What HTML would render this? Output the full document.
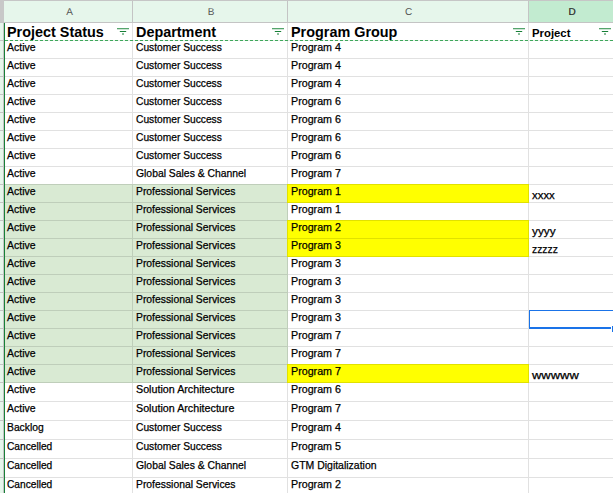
<!DOCTYPE html>
<html><head><meta charset="utf-8"><title>Sheet</title>
<style>
html,body{margin:0;padding:0;}
body{width:613px;height:493px;overflow:hidden;background:#fff;position:relative;font-family:"Liberation Sans",sans-serif;color:#000;}
.a{position:absolute;}
.t{position:absolute;white-space:nowrap;font-size:11px;line-height:14px;transform:scaleX(0.925);transform-origin:0 0;-webkit-text-stroke:0.25px #000;}
.h{position:absolute;white-space:nowrap;font-weight:bold;font-size:14.2px;line-height:16px;transform:scaleX(1.015);transform-origin:0 0;}
.ch{position:absolute;top:2px;height:21px;line-height:22px;text-align:center;font-size:10px;color:#555;text-rendering:geometricPrecision;}
</style></head><body>

<div class="a" style="left:0px;top:0px;width:613px;height:22px;background:#e6f6eb;"></div>
<div class="a" style="left:528px;top:0px;width:85px;height:22px;background:#c2ebd0;"></div>
<div class="a" style="left:0px;top:0px;width:613px;height:1px;background:#c6c6c6;"></div>
<div class="a" style="left:0px;top:22px;width:613px;height:1px;background:#c4c4c4;"></div>
<div class="a" style="left:0px;top:0px;width:4px;height:22px;background:#c8c8c8;"></div>
<div class="a" style="left:0px;top:23px;width:3px;height:470px;background:#e6f6eb;"></div>
<div class="a" style="left:3px;top:23px;width:1px;height:470px;background:#c4c4c4;"></div>
<div class="a" style="left:132px;top:1px;width:1px;height:21px;background:#c4c4c4;"></div>
<div class="a" style="left:287px;top:1px;width:1px;height:21px;background:#c4c4c4;"></div>
<div class="a" style="left:528px;top:1px;width:1px;height:21px;background:#c4c4c4;"></div>
<div class="ch" style="left:6px;width:127px;color:#555;">A</div>
<div class="ch" style="left:134px;width:154px;color:#555;">B</div>
<div class="ch" style="left:288px;width:241px;color:#555;">C</div>
<div class="ch" style="left:529px;width:86px;color:#222;-webkit-text-stroke:0.2px #222;">D</div>
<div class="a" style="left:5px;top:184px;width:283px;height:19px;background:#d9ead3;"></div>
<div class="a" style="left:5px;top:202px;width:283px;height:19px;background:#d9ead3;"></div>
<div class="a" style="left:5px;top:220px;width:283px;height:19px;background:#d9ead3;"></div>
<div class="a" style="left:5px;top:238px;width:283px;height:19px;background:#d9ead3;"></div>
<div class="a" style="left:5px;top:256px;width:283px;height:19px;background:#d9ead3;"></div>
<div class="a" style="left:5px;top:274px;width:283px;height:19px;background:#d9ead3;"></div>
<div class="a" style="left:5px;top:292px;width:283px;height:19px;background:#d9ead3;"></div>
<div class="a" style="left:5px;top:310px;width:283px;height:19px;background:#d9ead3;"></div>
<div class="a" style="left:5px;top:328px;width:283px;height:19px;background:#d9ead3;"></div>
<div class="a" style="left:5px;top:346px;width:283px;height:19px;background:#d9ead3;"></div>
<div class="a" style="left:5px;top:364px;width:283px;height:19px;background:#d9ead3;"></div>
<div class="a" style="left:287px;top:184px;width:242px;height:19px;background:#ffff00;"></div>
<div class="a" style="left:287px;top:220px;width:242px;height:19px;background:#ffff00;"></div>
<div class="a" style="left:287px;top:238px;width:242px;height:19px;background:#ffff00;"></div>
<div class="a" style="left:287px;top:364px;width:242px;height:19px;background:#ffff00;"></div>
<div class="a" style="left:0px;top:58px;width:3px;height:1px;background:#c4c4c4;"></div>
<div class="a" style="left:5px;top:58px;width:608px;height:1px;background:rgba(0,0,0,0.118);"></div>
<div class="a" style="left:0px;top:76px;width:3px;height:1px;background:#c4c4c4;"></div>
<div class="a" style="left:5px;top:76px;width:608px;height:1px;background:rgba(0,0,0,0.118);"></div>
<div class="a" style="left:0px;top:94px;width:3px;height:1px;background:#c4c4c4;"></div>
<div class="a" style="left:5px;top:94px;width:608px;height:1px;background:rgba(0,0,0,0.118);"></div>
<div class="a" style="left:0px;top:112px;width:3px;height:1px;background:#c4c4c4;"></div>
<div class="a" style="left:5px;top:112px;width:608px;height:1px;background:rgba(0,0,0,0.118);"></div>
<div class="a" style="left:0px;top:130px;width:3px;height:1px;background:#c4c4c4;"></div>
<div class="a" style="left:5px;top:130px;width:608px;height:1px;background:rgba(0,0,0,0.118);"></div>
<div class="a" style="left:0px;top:148px;width:3px;height:1px;background:#c4c4c4;"></div>
<div class="a" style="left:5px;top:148px;width:608px;height:1px;background:rgba(0,0,0,0.118);"></div>
<div class="a" style="left:0px;top:166px;width:3px;height:1px;background:#c4c4c4;"></div>
<div class="a" style="left:5px;top:166px;width:608px;height:1px;background:rgba(0,0,0,0.118);"></div>
<div class="a" style="left:0px;top:184px;width:3px;height:1px;background:#c4c4c4;"></div>
<div class="a" style="left:5px;top:184px;width:608px;height:1px;background:rgba(0,0,0,0.118);"></div>
<div class="a" style="left:0px;top:202px;width:3px;height:1px;background:#c4c4c4;"></div>
<div class="a" style="left:5px;top:202px;width:608px;height:1px;background:rgba(0,0,0,0.118);"></div>
<div class="a" style="left:0px;top:220px;width:3px;height:1px;background:#c4c4c4;"></div>
<div class="a" style="left:5px;top:220px;width:608px;height:1px;background:rgba(0,0,0,0.118);"></div>
<div class="a" style="left:0px;top:238px;width:3px;height:1px;background:#c4c4c4;"></div>
<div class="a" style="left:5px;top:238px;width:608px;height:1px;background:rgba(0,0,0,0.118);"></div>
<div class="a" style="left:0px;top:256px;width:3px;height:1px;background:#c4c4c4;"></div>
<div class="a" style="left:5px;top:256px;width:608px;height:1px;background:rgba(0,0,0,0.118);"></div>
<div class="a" style="left:0px;top:274px;width:3px;height:1px;background:#c4c4c4;"></div>
<div class="a" style="left:5px;top:274px;width:608px;height:1px;background:rgba(0,0,0,0.118);"></div>
<div class="a" style="left:0px;top:292px;width:3px;height:1px;background:#c4c4c4;"></div>
<div class="a" style="left:5px;top:292px;width:608px;height:1px;background:rgba(0,0,0,0.118);"></div>
<div class="a" style="left:0px;top:310px;width:3px;height:1px;background:#c4c4c4;"></div>
<div class="a" style="left:5px;top:310px;width:608px;height:1px;background:rgba(0,0,0,0.118);"></div>
<div class="a" style="left:0px;top:328px;width:3px;height:1px;background:#c4c4c4;"></div>
<div class="a" style="left:5px;top:328px;width:608px;height:1px;background:rgba(0,0,0,0.118);"></div>
<div class="a" style="left:0px;top:346px;width:3px;height:1px;background:#c4c4c4;"></div>
<div class="a" style="left:5px;top:346px;width:608px;height:1px;background:rgba(0,0,0,0.118);"></div>
<div class="a" style="left:0px;top:364px;width:3px;height:1px;background:#c4c4c4;"></div>
<div class="a" style="left:5px;top:364px;width:608px;height:1px;background:rgba(0,0,0,0.118);"></div>
<div class="a" style="left:0px;top:382px;width:3px;height:1px;background:#c4c4c4;"></div>
<div class="a" style="left:5px;top:382px;width:608px;height:1px;background:rgba(0,0,0,0.118);"></div>
<div class="a" style="left:0px;top:401px;width:3px;height:1px;background:#c4c4c4;"></div>
<div class="a" style="left:5px;top:401px;width:608px;height:1px;background:rgba(0,0,0,0.118);"></div>
<div class="a" style="left:0px;top:420px;width:3px;height:1px;background:#c4c4c4;"></div>
<div class="a" style="left:5px;top:420px;width:608px;height:1px;background:rgba(0,0,0,0.118);"></div>
<div class="a" style="left:0px;top:439px;width:3px;height:1px;background:#c4c4c4;"></div>
<div class="a" style="left:5px;top:439px;width:608px;height:1px;background:rgba(0,0,0,0.118);"></div>
<div class="a" style="left:0px;top:458px;width:3px;height:1px;background:#c4c4c4;"></div>
<div class="a" style="left:5px;top:458px;width:608px;height:1px;background:rgba(0,0,0,0.118);"></div>
<div class="a" style="left:0px;top:477px;width:3px;height:1px;background:#c4c4c4;"></div>
<div class="a" style="left:5px;top:477px;width:608px;height:1px;background:rgba(0,0,0,0.118);"></div>
<div class="a" style="left:0px;top:496px;width:3px;height:1px;background:#c4c4c4;"></div>
<div class="a" style="left:5px;top:496px;width:608px;height:1px;background:rgba(0,0,0,0.118);"></div>
<div class="a" style="left:132px;top:41px;width:1px;height:17px;background:rgba(0,0,0,0.118);"></div>
<div class="a" style="left:132px;top:59px;width:1px;height:17px;background:rgba(0,0,0,0.118);"></div>
<div class="a" style="left:132px;top:77px;width:1px;height:17px;background:rgba(0,0,0,0.118);"></div>
<div class="a" style="left:132px;top:95px;width:1px;height:17px;background:rgba(0,0,0,0.118);"></div>
<div class="a" style="left:132px;top:113px;width:1px;height:17px;background:rgba(0,0,0,0.118);"></div>
<div class="a" style="left:132px;top:131px;width:1px;height:17px;background:rgba(0,0,0,0.118);"></div>
<div class="a" style="left:132px;top:149px;width:1px;height:17px;background:rgba(0,0,0,0.118);"></div>
<div class="a" style="left:132px;top:167px;width:1px;height:17px;background:rgba(0,0,0,0.118);"></div>
<div class="a" style="left:132px;top:185px;width:1px;height:17px;background:rgba(0,0,0,0.118);"></div>
<div class="a" style="left:132px;top:203px;width:1px;height:17px;background:rgba(0,0,0,0.118);"></div>
<div class="a" style="left:132px;top:221px;width:1px;height:17px;background:rgba(0,0,0,0.118);"></div>
<div class="a" style="left:132px;top:239px;width:1px;height:17px;background:rgba(0,0,0,0.118);"></div>
<div class="a" style="left:132px;top:257px;width:1px;height:17px;background:rgba(0,0,0,0.118);"></div>
<div class="a" style="left:132px;top:275px;width:1px;height:17px;background:rgba(0,0,0,0.118);"></div>
<div class="a" style="left:132px;top:293px;width:1px;height:17px;background:rgba(0,0,0,0.118);"></div>
<div class="a" style="left:132px;top:311px;width:1px;height:17px;background:rgba(0,0,0,0.118);"></div>
<div class="a" style="left:132px;top:329px;width:1px;height:17px;background:rgba(0,0,0,0.118);"></div>
<div class="a" style="left:132px;top:347px;width:1px;height:17px;background:rgba(0,0,0,0.118);"></div>
<div class="a" style="left:132px;top:365px;width:1px;height:17px;background:rgba(0,0,0,0.118);"></div>
<div class="a" style="left:132px;top:383px;width:1px;height:18px;background:rgba(0,0,0,0.118);"></div>
<div class="a" style="left:132px;top:402px;width:1px;height:18px;background:rgba(0,0,0,0.118);"></div>
<div class="a" style="left:132px;top:421px;width:1px;height:18px;background:rgba(0,0,0,0.118);"></div>
<div class="a" style="left:132px;top:440px;width:1px;height:18px;background:rgba(0,0,0,0.118);"></div>
<div class="a" style="left:132px;top:459px;width:1px;height:18px;background:rgba(0,0,0,0.118);"></div>
<div class="a" style="left:132px;top:478px;width:1px;height:15px;background:rgba(0,0,0,0.118);"></div>
<div class="a" style="left:132px;top:23px;width:1px;height:17px;background:rgba(0,0,0,0.118);"></div>
<div class="a" style="left:287px;top:41px;width:1px;height:17px;background:rgba(0,0,0,0.118);"></div>
<div class="a" style="left:287px;top:59px;width:1px;height:17px;background:rgba(0,0,0,0.118);"></div>
<div class="a" style="left:287px;top:77px;width:1px;height:17px;background:rgba(0,0,0,0.118);"></div>
<div class="a" style="left:287px;top:95px;width:1px;height:17px;background:rgba(0,0,0,0.118);"></div>
<div class="a" style="left:287px;top:113px;width:1px;height:17px;background:rgba(0,0,0,0.118);"></div>
<div class="a" style="left:287px;top:131px;width:1px;height:17px;background:rgba(0,0,0,0.118);"></div>
<div class="a" style="left:287px;top:149px;width:1px;height:17px;background:rgba(0,0,0,0.118);"></div>
<div class="a" style="left:287px;top:167px;width:1px;height:17px;background:rgba(0,0,0,0.118);"></div>
<div class="a" style="left:287px;top:185px;width:1px;height:17px;background:rgba(0,0,0,0.118);"></div>
<div class="a" style="left:287px;top:203px;width:1px;height:17px;background:rgba(0,0,0,0.118);"></div>
<div class="a" style="left:287px;top:221px;width:1px;height:17px;background:rgba(0,0,0,0.118);"></div>
<div class="a" style="left:287px;top:239px;width:1px;height:17px;background:rgba(0,0,0,0.118);"></div>
<div class="a" style="left:287px;top:257px;width:1px;height:17px;background:rgba(0,0,0,0.118);"></div>
<div class="a" style="left:287px;top:275px;width:1px;height:17px;background:rgba(0,0,0,0.118);"></div>
<div class="a" style="left:287px;top:293px;width:1px;height:17px;background:rgba(0,0,0,0.118);"></div>
<div class="a" style="left:287px;top:311px;width:1px;height:17px;background:rgba(0,0,0,0.118);"></div>
<div class="a" style="left:287px;top:329px;width:1px;height:17px;background:rgba(0,0,0,0.118);"></div>
<div class="a" style="left:287px;top:347px;width:1px;height:17px;background:rgba(0,0,0,0.118);"></div>
<div class="a" style="left:287px;top:365px;width:1px;height:17px;background:rgba(0,0,0,0.118);"></div>
<div class="a" style="left:287px;top:383px;width:1px;height:18px;background:rgba(0,0,0,0.118);"></div>
<div class="a" style="left:287px;top:402px;width:1px;height:18px;background:rgba(0,0,0,0.118);"></div>
<div class="a" style="left:287px;top:421px;width:1px;height:18px;background:rgba(0,0,0,0.118);"></div>
<div class="a" style="left:287px;top:440px;width:1px;height:18px;background:rgba(0,0,0,0.118);"></div>
<div class="a" style="left:287px;top:459px;width:1px;height:18px;background:rgba(0,0,0,0.118);"></div>
<div class="a" style="left:287px;top:478px;width:1px;height:15px;background:rgba(0,0,0,0.118);"></div>
<div class="a" style="left:287px;top:23px;width:1px;height:17px;background:rgba(0,0,0,0.118);"></div>
<div class="a" style="left:528px;top:41px;width:1px;height:17px;background:rgba(0,0,0,0.118);"></div>
<div class="a" style="left:528px;top:59px;width:1px;height:17px;background:rgba(0,0,0,0.118);"></div>
<div class="a" style="left:528px;top:77px;width:1px;height:17px;background:rgba(0,0,0,0.118);"></div>
<div class="a" style="left:528px;top:95px;width:1px;height:17px;background:rgba(0,0,0,0.118);"></div>
<div class="a" style="left:528px;top:113px;width:1px;height:17px;background:rgba(0,0,0,0.118);"></div>
<div class="a" style="left:528px;top:131px;width:1px;height:17px;background:rgba(0,0,0,0.118);"></div>
<div class="a" style="left:528px;top:149px;width:1px;height:17px;background:rgba(0,0,0,0.118);"></div>
<div class="a" style="left:528px;top:167px;width:1px;height:17px;background:rgba(0,0,0,0.118);"></div>
<div class="a" style="left:528px;top:185px;width:1px;height:17px;background:rgba(0,0,0,0.118);"></div>
<div class="a" style="left:528px;top:203px;width:1px;height:17px;background:rgba(0,0,0,0.118);"></div>
<div class="a" style="left:528px;top:221px;width:1px;height:17px;background:rgba(0,0,0,0.118);"></div>
<div class="a" style="left:528px;top:239px;width:1px;height:17px;background:rgba(0,0,0,0.118);"></div>
<div class="a" style="left:528px;top:257px;width:1px;height:17px;background:rgba(0,0,0,0.118);"></div>
<div class="a" style="left:528px;top:275px;width:1px;height:17px;background:rgba(0,0,0,0.118);"></div>
<div class="a" style="left:528px;top:293px;width:1px;height:17px;background:rgba(0,0,0,0.118);"></div>
<div class="a" style="left:528px;top:311px;width:1px;height:17px;background:rgba(0,0,0,0.118);"></div>
<div class="a" style="left:528px;top:329px;width:1px;height:17px;background:rgba(0,0,0,0.118);"></div>
<div class="a" style="left:528px;top:347px;width:1px;height:17px;background:rgba(0,0,0,0.118);"></div>
<div class="a" style="left:528px;top:365px;width:1px;height:17px;background:rgba(0,0,0,0.118);"></div>
<div class="a" style="left:528px;top:383px;width:1px;height:18px;background:rgba(0,0,0,0.118);"></div>
<div class="a" style="left:528px;top:402px;width:1px;height:18px;background:rgba(0,0,0,0.118);"></div>
<div class="a" style="left:528px;top:421px;width:1px;height:18px;background:rgba(0,0,0,0.118);"></div>
<div class="a" style="left:528px;top:440px;width:1px;height:18px;background:rgba(0,0,0,0.118);"></div>
<div class="a" style="left:528px;top:459px;width:1px;height:18px;background:rgba(0,0,0,0.118);"></div>
<div class="a" style="left:528px;top:478px;width:1px;height:15px;background:rgba(0,0,0,0.118);"></div>
<div class="a" style="left:528px;top:23px;width:1px;height:17px;background:rgba(0,0,0,0.118);"></div>
<div class="a" style="left:0px;top:40px;width:3px;height:1px;background:#c4c4c4;"></div>
<div class="a" style="left:5px;top:40px;width:608px;height:1px;background:repeating-linear-gradient(90deg,#3fa75b 0,#3fa75b 3px,#e4efe6 3px,#e4efe6 5px);"></div>
<div class="a" style="left:4px;top:23px;width:1px;height:470px;background:#188038;"></div>
<div class="h" style="left:7px;top:24px;">Project Status</div>
<div class="h" style="left:136px;top:24px;">Department</div>
<div class="h" style="left:291px;top:24px;">Program Group</div>
<div class="h" style="left:532px;top:26px;font-size:11px;line-height:14px;transform:scaleX(1.03);">Project</div>
<div class="a" style="left:117px;top:28px;width:12px;height:1px;background:#55a56c;"></div>
<div class="a" style="left:117px;top:29px;width:12px;height:1px;background:rgba(24,128,56,0.22);"></div>
<div class="a" style="left:119.5px;top:31px;width:6.6px;height:1px;background:#188038;"></div>
<div class="a" style="left:119px;top:30.6px;width:8px;height:1.8px;background:rgba(24,128,56,0.18);"></div>
<div class="a" style="left:122px;top:33.4px;width:2px;height:1.6px;background:rgba(24,128,56,0.5);"></div>
<div class="a" style="left:272px;top:28px;width:12px;height:1px;background:#55a56c;"></div>
<div class="a" style="left:272px;top:29px;width:12px;height:1px;background:rgba(24,128,56,0.22);"></div>
<div class="a" style="left:274.5px;top:31px;width:6.6px;height:1px;background:#188038;"></div>
<div class="a" style="left:274px;top:30.6px;width:8px;height:1.8px;background:rgba(24,128,56,0.18);"></div>
<div class="a" style="left:277px;top:33.4px;width:2px;height:1.6px;background:rgba(24,128,56,0.5);"></div>
<div class="a" style="left:513px;top:28px;width:12px;height:1px;background:#55a56c;"></div>
<div class="a" style="left:513px;top:29px;width:12px;height:1px;background:rgba(24,128,56,0.22);"></div>
<div class="a" style="left:515.5px;top:31px;width:6.6px;height:1px;background:#188038;"></div>
<div class="a" style="left:515px;top:30.6px;width:8px;height:1.8px;background:rgba(24,128,56,0.18);"></div>
<div class="a" style="left:518px;top:33.4px;width:2px;height:1.6px;background:rgba(24,128,56,0.5);"></div>
<div class="a" style="left:599px;top:28px;width:12px;height:1px;background:#55a56c;"></div>
<div class="a" style="left:599px;top:29px;width:12px;height:1px;background:rgba(24,128,56,0.22);"></div>
<div class="a" style="left:601.5px;top:31px;width:6.6px;height:1px;background:#188038;"></div>
<div class="a" style="left:601px;top:30.6px;width:8px;height:1.8px;background:rgba(24,128,56,0.18);"></div>
<div class="a" style="left:604px;top:33.4px;width:2px;height:1.6px;background:rgba(24,128,56,0.5);"></div>
<div class="t" style="left:7px;top:40px;transform:scaleX(0.953);">Active</div>
<div class="t" style="left:136px;top:40px;transform:scaleX(0.93);">Customer Success</div>
<div class="t" style="left:291px;top:40px;transform:scaleX(0.972);">Program 4</div>
<div class="t" style="left:7px;top:58px;transform:scaleX(0.953);">Active</div>
<div class="t" style="left:136px;top:58px;transform:scaleX(0.93);">Customer Success</div>
<div class="t" style="left:291px;top:58px;transform:scaleX(0.972);">Program 4</div>
<div class="t" style="left:7px;top:76px;transform:scaleX(0.953);">Active</div>
<div class="t" style="left:136px;top:76px;transform:scaleX(0.93);">Customer Success</div>
<div class="t" style="left:291px;top:76px;transform:scaleX(0.972);">Program 4</div>
<div class="t" style="left:7px;top:94px;transform:scaleX(0.953);">Active</div>
<div class="t" style="left:136px;top:94px;transform:scaleX(0.93);">Customer Success</div>
<div class="t" style="left:291px;top:94px;transform:scaleX(0.972);">Program 6</div>
<div class="t" style="left:7px;top:112px;transform:scaleX(0.953);">Active</div>
<div class="t" style="left:136px;top:112px;transform:scaleX(0.93);">Customer Success</div>
<div class="t" style="left:291px;top:112px;transform:scaleX(0.972);">Program 6</div>
<div class="t" style="left:7px;top:130px;transform:scaleX(0.953);">Active</div>
<div class="t" style="left:136px;top:130px;transform:scaleX(0.93);">Customer Success</div>
<div class="t" style="left:291px;top:130px;transform:scaleX(0.972);">Program 6</div>
<div class="t" style="left:7px;top:148px;transform:scaleX(0.953);">Active</div>
<div class="t" style="left:136px;top:148px;transform:scaleX(0.93);">Customer Success</div>
<div class="t" style="left:291px;top:148px;transform:scaleX(0.972);">Program 6</div>
<div class="t" style="left:7px;top:166px;transform:scaleX(0.953);">Active</div>
<div class="t" style="left:136px;top:166px;transform:scaleX(0.943);">Global Sales &amp; Channel</div>
<div class="t" style="left:291px;top:166px;transform:scaleX(0.972);">Program 7</div>
<div class="t" style="left:7px;top:184px;transform:scaleX(0.953);">Active</div>
<div class="t" style="left:136px;top:184px;transform:scaleX(0.941);">Professional Services</div>
<div class="t" style="left:291px;top:184px;transform:scaleX(0.972);">Program 1</div>
<div class="t" style="left:532px;top:188.4px;transform:scaleX(1.036);">xxxx</div>
<div class="t" style="left:7px;top:202px;transform:scaleX(0.953);">Active</div>
<div class="t" style="left:136px;top:202px;transform:scaleX(0.941);">Professional Services</div>
<div class="t" style="left:291px;top:202px;transform:scaleX(0.972);">Program 1</div>
<div class="t" style="left:7px;top:220px;transform:scaleX(0.953);">Active</div>
<div class="t" style="left:136px;top:220px;transform:scaleX(0.941);">Professional Services</div>
<div class="t" style="left:291px;top:220px;transform:scaleX(0.972);">Program 2</div>
<div class="t" style="left:532px;top:224.4px;transform:scaleX(1.073);">yyyy</div>
<div class="t" style="left:7px;top:238px;transform:scaleX(0.953);">Active</div>
<div class="t" style="left:136px;top:238px;transform:scaleX(0.941);">Professional Services</div>
<div class="t" style="left:291px;top:238px;transform:scaleX(0.972);">Program 3</div>
<div class="t" style="left:532px;top:242.4px;transform:scaleX(0.943);">zzzzz</div>
<div class="t" style="left:7px;top:256px;transform:scaleX(0.953);">Active</div>
<div class="t" style="left:136px;top:256px;transform:scaleX(0.941);">Professional Services</div>
<div class="t" style="left:291px;top:256px;transform:scaleX(0.972);">Program 3</div>
<div class="t" style="left:7px;top:274px;transform:scaleX(0.953);">Active</div>
<div class="t" style="left:136px;top:274px;transform:scaleX(0.941);">Professional Services</div>
<div class="t" style="left:291px;top:274px;transform:scaleX(0.972);">Program 3</div>
<div class="t" style="left:7px;top:292px;transform:scaleX(0.953);">Active</div>
<div class="t" style="left:136px;top:292px;transform:scaleX(0.941);">Professional Services</div>
<div class="t" style="left:291px;top:292px;transform:scaleX(0.972);">Program 3</div>
<div class="t" style="left:7px;top:310px;transform:scaleX(0.953);">Active</div>
<div class="t" style="left:136px;top:310px;transform:scaleX(0.941);">Professional Services</div>
<div class="t" style="left:291px;top:310px;transform:scaleX(0.972);">Program 3</div>
<div class="t" style="left:7px;top:328px;transform:scaleX(0.953);">Active</div>
<div class="t" style="left:136px;top:328px;transform:scaleX(0.941);">Professional Services</div>
<div class="t" style="left:291px;top:328px;transform:scaleX(0.972);">Program 7</div>
<div class="t" style="left:7px;top:346px;transform:scaleX(0.953);">Active</div>
<div class="t" style="left:136px;top:346px;transform:scaleX(0.941);">Professional Services</div>
<div class="t" style="left:291px;top:346px;transform:scaleX(0.972);">Program 7</div>
<div class="t" style="left:7px;top:364px;transform:scaleX(0.953);">Active</div>
<div class="t" style="left:136px;top:364px;transform:scaleX(0.941);">Professional Services</div>
<div class="t" style="left:291px;top:364px;transform:scaleX(0.972);">Program 7</div>
<div class="t" style="left:532px;top:368.4px;transform:scaleX(1.177);">wwwww</div>
<div class="t" style="left:7px;top:382px;transform:scaleX(0.953);">Active</div>
<div class="t" style="left:136px;top:382px;transform:scaleX(0.975);">Solution Architecture</div>
<div class="t" style="left:291px;top:382px;transform:scaleX(0.972);">Program 6</div>
<div class="t" style="left:7px;top:401px;transform:scaleX(0.953);">Active</div>
<div class="t" style="left:136px;top:401px;transform:scaleX(0.975);">Solution Architecture</div>
<div class="t" style="left:291px;top:401px;transform:scaleX(0.972);">Program 7</div>
<div class="t" style="left:7px;top:420px;transform:scaleX(0.938);">Backlog</div>
<div class="t" style="left:136px;top:420px;transform:scaleX(0.93);">Customer Success</div>
<div class="t" style="left:291px;top:420px;transform:scaleX(0.972);">Program 4</div>
<div class="t" style="left:7px;top:439px;transform:scaleX(0.925);">Cancelled</div>
<div class="t" style="left:136px;top:439px;transform:scaleX(0.93);">Customer Success</div>
<div class="t" style="left:291px;top:439px;transform:scaleX(0.972);">Program 5</div>
<div class="t" style="left:7px;top:458px;transform:scaleX(0.925);">Cancelled</div>
<div class="t" style="left:136px;top:458px;transform:scaleX(0.943);">Global Sales &amp; Channel</div>
<div class="t" style="left:291px;top:458px;transform:scaleX(0.952);">GTM Digitalization</div>
<div class="t" style="left:7px;top:477px;transform:scaleX(0.925);">Cancelled</div>
<div class="t" style="left:136px;top:477px;transform:scaleX(0.941);">Professional Services</div>
<div class="t" style="left:291px;top:477px;transform:scaleX(0.972);">Program 2</div>
<div class="a" style="left:529px;top:310px;width:84px;height:1.2px;background:#1a73e8;"></div>
<div class="a" style="left:529px;top:310px;width:1.3px;height:18px;background:#1a73e8;"></div>
<div class="a" style="left:529px;top:327px;width:81.6px;height:2px;background:#1a73e8;"></div>
<div class="a" style="left:610.6px;top:325.5px;width:3px;height:7.5px;background:#fff;"></div>
<div class="a" style="left:611.5px;top:326.2px;width:2px;height:6px;background:#1a73e8;"></div>
</body></html>
